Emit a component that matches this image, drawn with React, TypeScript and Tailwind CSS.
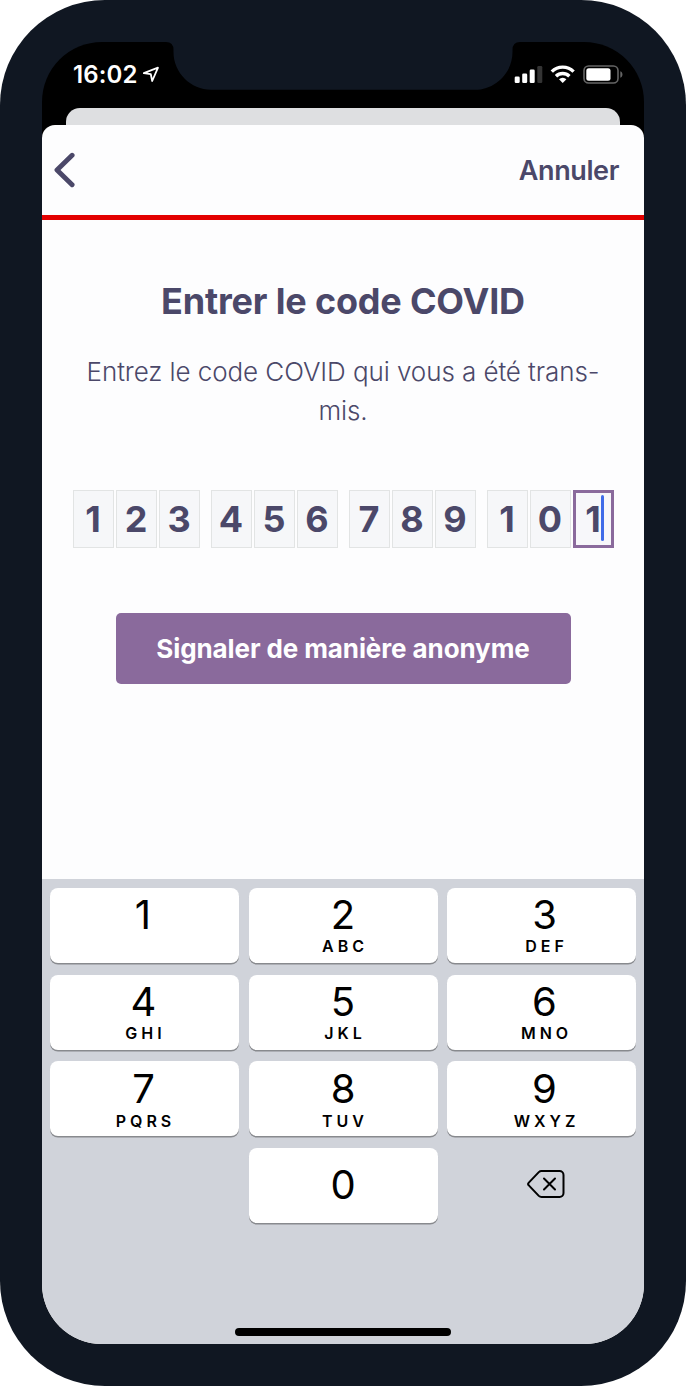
import React from "react";

const codeGroups: string[][] = [
  ["1", "2", "3"],
  ["4", "5", "6"],
  ["7", "8", "9"],
  ["1", "0", "1"],
];

const keys: { digit: string; letters: string; pad: string; shift: string }[] = [
  { digit: "1", letters: "", pad: "pt-[2.5px]", shift: "pr-[3px]" },
  { digit: "2", letters: "ABC", pad: "pt-[2.5px]", shift: "" },
  { digit: "3", letters: "DEF", pad: "pt-[2.5px]", shift: "pl-[6px]" },
  { digit: "4", letters: "GHI", pad: "pt-[3px]", shift: "pr-[2px]" },
  { digit: "5", letters: "JKL", pad: "pt-[3px]", shift: "" },
  { digit: "6", letters: "MNO", pad: "pt-[3px]", shift: "pl-[6px]" },
  { digit: "7", letters: "PQRS", pad: "pt-[4px]", shift: "pr-[2px]" },
  { digit: "8", letters: "TUV", pad: "pt-[4px]", shift: "" },
  { digit: "9", letters: "WXYZ", pad: "pt-[4px]", shift: "pl-[6px]" },
];

function StatusBar() {
  return (
    <div className="flex h-[66px] shrink-0 justify-between pr-[20px] pl-[31px]">
      <div className="flex items-start pt-[18px] text-white">
        <span className="text-[24px] leading-[30px] font-semibold tracking-[0.1px]">16:02</span>
        <svg className="mt-[4px] ml-[4px] h-[20px] w-[20px]" viewBox="0 0 20 20" fill="none">
          <path d="M17 3.7 2.8 9.100 9.8 10.200 11.200 17Z" stroke="white" strokeWidth="1.8" strokeLinejoin="round" />
        </svg>
      </div>
      <svg className="mt-[22px] h-[22px] w-[110px]" viewBox="0 0 110 22">
        <rect x="0.7" y="12.5" width="5" height="6.6" rx="1.3" fill="white" />
        <rect x="8.2" y="9.5" width="5" height="9.6" rx="1.3" fill="white" />
        <rect x="15.7" y="5.5" width="5" height="13.6" rx="1.3" fill="white" />
        <rect x="23.3" y="2" width="5" height="17.1" rx="1.3" fill="#343434" />
        <g fill="none" stroke="white" strokeWidth="3.4">
          <path d="M37.8 7.6a15.5 15.5 0 0 1 21.8 0" />
          <path d="M42 12.2a9.6 9.6 0 0 1 13.4 0" />
        </g>
        <path d="M45 15.2a5.2 5.2 0 0 1 7.4 0L48.7 19z" fill="white" />
        <rect x="70" y="2" width="34" height="17" rx="4.6" fill="none" stroke="#656565" strokeWidth="1.6" />
        <rect x="72.3" y="4.2" width="24.2" height="12.6" rx="2.5" fill="white" />
        <path d="M106.3 7.2c2.9.8 2.9 5.8 0 6.6z" fill="#656565" />
      </svg>
    </div>
  );
}

function Header() {
  return (
    <header className="flex h-[95px] shrink-0 items-start justify-between border-b-[5px] border-[#e30000] pr-[25px] pl-[12px]">
      <svg className="mt-[27px] h-[36px] w-[22px]" viewBox="0 0 22 36" fill="none">
        <path d="M18.1 3.3 3 18 18.1 32.7" stroke="#4b4869" strokeWidth="4.9" strokeLinecap="round" strokeLinejoin="round" />
      </svg>
      <span className="mt-[26px] text-[27px] leading-[40px] font-semibold tracking-[-0.4px]">Annuler</span>
    </header>
  );
}

function CodeInput() {
  return (
    <div className="mt-[60px] flex w-[541px] justify-between self-center">
      {codeGroups.map((group, g) => (
        <div key={g} className="flex gap-[2px]">
          {group.map((digit, i) => {
            const active = g === 3 && i === 2;
            return (
              <div
                key={i}
                className={
                  active
                    ? "flex h-[58px] w-[41px] justify-center border-[3px] border-[#8a6a9c] bg-[#f7f7fa] text-[36px] leading-[52px] font-bold"
                    : "flex h-[58px] w-[41px] justify-center border-[1.5px] border-[#e2e4e4] bg-[#f6f7f9] text-[36px] leading-[56px] font-bold"
                }
              >
                <span className="relative">
                  {digit}
                  {active && <span className="absolute top-[2px] left-[16px] h-[46px] w-[3px] rounded-full bg-[#3f6be8]" />}
                </span>
              </div>
            );
          })}
        </div>
      ))}
    </div>
  );
}

function Key({ digit, letters, pad, shift }: { digit: string; letters: string; pad: string; shift: string }) {
  return (
    <div className={`flex h-[75px] flex-col items-center rounded-[8px] bg-white shadow-[0_1.5px_0_#888a8e] ${pad} ${shift}`}>
      <span className="text-[40px] leading-[48px]">{digit}</span>
      <span className="mt-[-2.5px] pl-[4px] text-[16px] leading-[20px] font-semibold tracking-[4px]">{letters}</span>
    </div>
  );
}

function Keypad() {
  return (
    <div className="flex h-[465px] shrink-0 flex-col bg-[#d0d3da] px-[8px] pt-[9px] text-black">
      <div className="grid grid-cols-3 gap-x-[9.5px] gap-y-[11.7px]">
        {keys.map((key) => (
          <Key key={key.digit} {...key} />
        ))}
        <div />
        <div className="flex h-[74.5px] justify-center rounded-[8px] bg-white text-[40px] leading-[74px] shadow-[0_1.5px_0_#888a8e]">0</div>
        <div className="flex justify-center pt-[21px] pl-[8px]">
          <svg className="h-[30px] w-[40px]" viewBox="0 0 40 30" fill="none" stroke="black" strokeWidth="2" strokeLinecap="round" strokeLinejoin="round">
            <path d="M15.6 2H33.5a4 4 0 0 1 4 4v18a4 4 0 0 1-4 4H15.6a4 4 0 0 1-2.8-1.1L2.8 16.4a2 2 0 0 1 0-2.8l10-10.5A4 4 0 0 1 15.6 2Z" />
            <path d="m18 9.5 11 11m0-11-11 11" />
          </svg>
        </div>
      </div>
      <div className="mt-auto mb-[8px] h-[8px] w-[216px] self-center rounded-full bg-black" />
    </div>
  );
}

export default function App() {
  return (
    <div className="h-[1386px] w-[686px] bg-white font-['Inter',sans-serif] text-[#4b4869]">
      <div className="h-full w-full rounded-[105px] bg-[#101722] p-[42px]">
        <div className="relative flex h-full flex-col overflow-hidden rounded-[60px] bg-black">
          <svg className="absolute top-0 left-[121px] h-[49px] w-[360px]" viewBox="0 0 360 49">
            <path d="M0 0H3Q10.5 0 10.5 8V10C10.5 31 28 47.8 48 47.8H312C332 47.8 349.5 31 349.5 10V8Q349.5 0 357 0H360Z" fill="#101722" />
          </svg>
          <StatusBar />
          <div className="mx-[24px] h-[17px] shrink-0 rounded-t-[14px] bg-[#dedfe1]" />
          <div className="flex min-h-0 grow flex-col overflow-hidden rounded-t-[13px] bg-[#fdfdfe]">
            <Header />
            <main className="flex grow flex-col items-center">
              <h1 className="mt-[58px] text-[36px] leading-[46px] font-bold tracking-[-0.18px]">Entrer le code COVID</h1>
              <p className="mt-[28px] text-center text-[26px] leading-[39px] font-light tracking-[-0.08px]">
                Entrez le code COVID qui vous a été trans-
                <br />
                mis.
              </p>
              <CodeInput />
              <button className="mt-[65px] flex h-[71px] w-[455px] items-center justify-center rounded-[5px] bg-[#8a6a9c] text-[26px] font-bold tracking-[-0.1px] text-white">
                Signaler de manière anonyme
              </button>
            </main>
            <Keypad />
          </div>
        </div>
      </div>
    </div>
  );
}
